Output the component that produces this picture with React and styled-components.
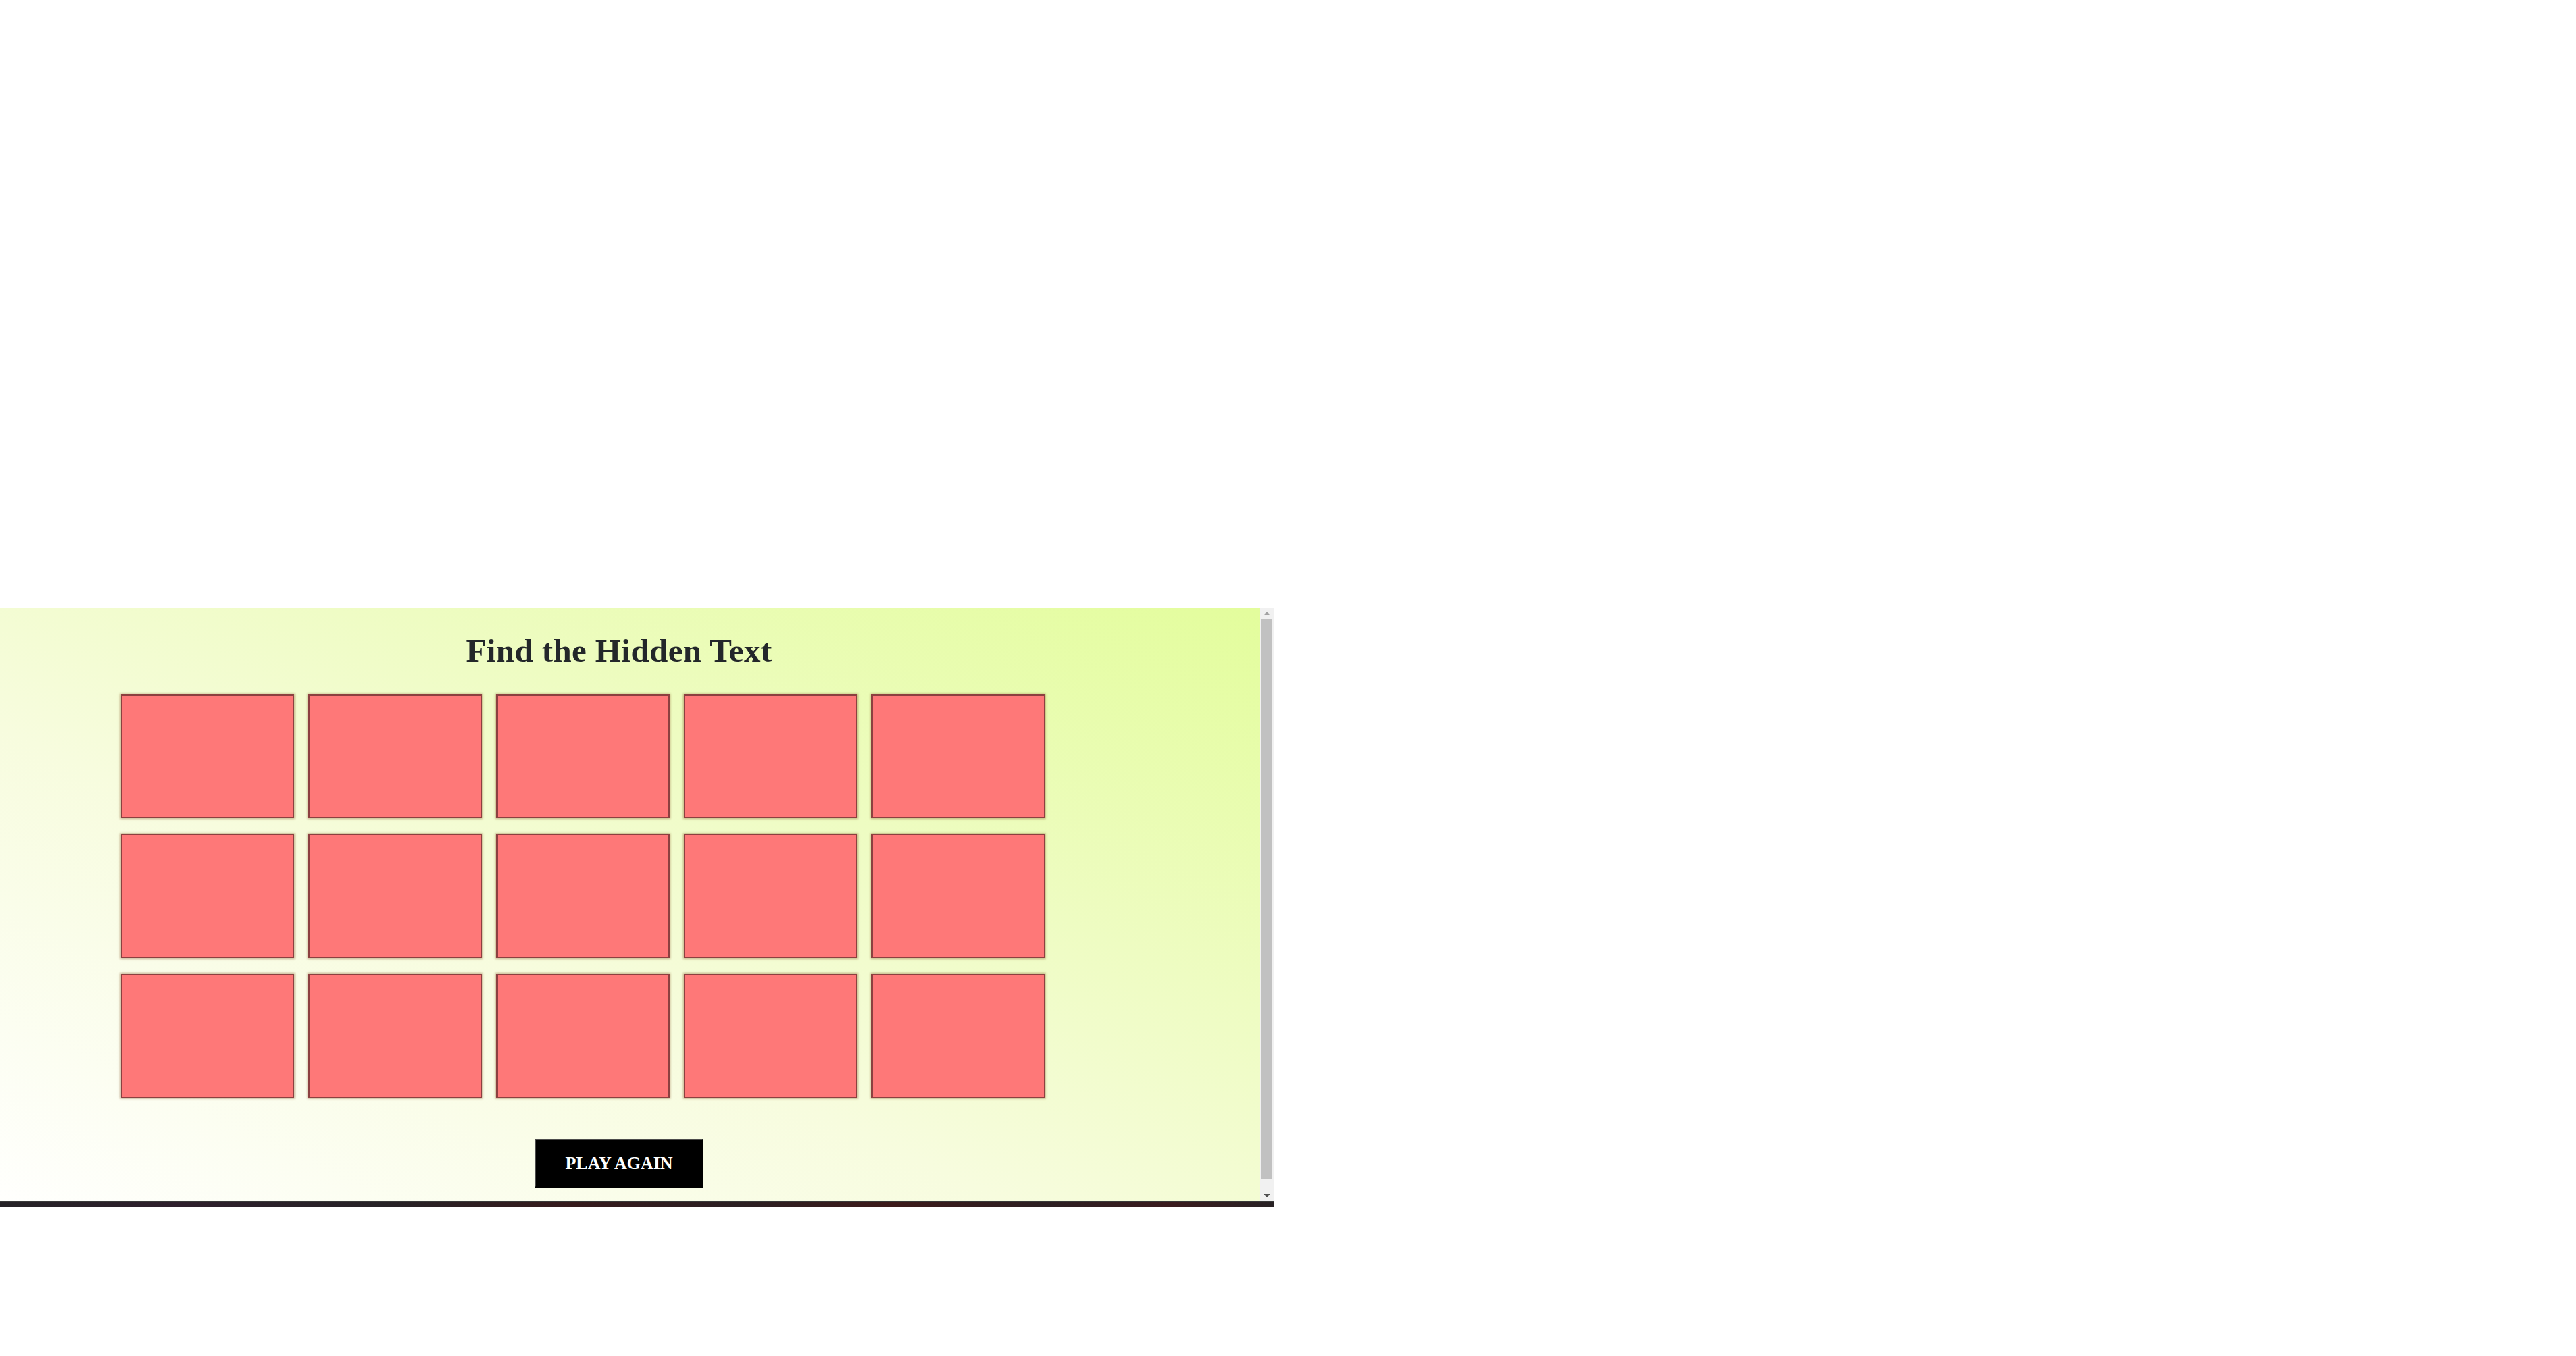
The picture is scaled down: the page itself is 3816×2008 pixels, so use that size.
import styled, { createGlobalStyle } from "styled-components";

const GlobalStyle = createGlobalStyle`
    html, body {
        margin: 0;
        padding: 0;
        background: #ffffff;
    }
`;

const Page = styled.div`
    padding-top: 900px;
    min-height: 2008px;
    box-sizing: border-box;
`;

const Frame = styled.div`
    width: 1887px;
    display: flex;
    flex-direction: column;
`;

const Window = styled.div`
    height: 879px;
    display: flex;
`;

const Viewport = styled.div`
    flex: 1;
    overflow: hidden;
    background: linear-gradient(to top right, #fffffd 0%, #f7fcde 40%, #eefcc2 66%, #e3fd9c 100%);
`;

const ScrollBar = styled.div`
    width: 21px;
    background: #f1f1f1;
    display: flex;
    flex-direction: column;
`;

const ArrowButton = styled.div`
    height: 17px;
    display: flex;
    align-items: center;
    justify-content: center;

    &::before {
        content: "";
        width: 0;
        height: 0;
        border-left: 5px solid transparent;
        border-right: 5px solid transparent;
        ${(p) =>
            p.$down
                ? `border-top: 5px solid #505050;`
                : `border-bottom: 5px solid #a3a3a3;`}
    }
`;

const Track = styled.div`
    flex: 1;
    padding: 0 2px 16px;
    display: flex;
`;

const Thumb = styled.div`
    flex: 1;
    background: #c1c1c1;
`;

const Content = styled.div`
    width: 1834px;
    padding-bottom: 40px;
    display: flex;
    flex-direction: column;
    align-items: center;
`;

const Title = styled.h1`
    margin: 36px 0 0;
    font-family: "Liberation Serif", "Times New Roman", serif;
    font-weight: 700;
    font-size: 49px;
    letter-spacing: 0.4px;
    line-height: 56px;
    color: #23272a;
`;

const Board = styled.div`
    align-self: flex-start;
    margin: 36px 0 0 179px;
    display: grid;
    grid-template-columns: repeat(5, 257px);
    grid-auto-rows: 184px;
    column-gap: 21px;
    row-gap: 23px;
`;

const Card = styled.div`
    box-sizing: border-box;
    background: ${(p) => (p.$open ? "#ffffff" : "#fe7878")};
    border: 2px solid #8c4040;
    box-shadow: 0 0 3px 1px rgba(130, 80, 30, 0.45);
    cursor: pointer;
`;

const PlayButton = styled.button`
    margin-top: 60px;
    width: 250px;
    height: 73px;
    box-sizing: border-box;
    background: #000000;
    color: #ffffff;
    border: 2px solid;
    border-color: #4c4c4c #000000 #000000 #4c4c4c;
    font-family: "Liberation Serif", "Times New Roman", serif;
    font-weight: 700;
    font-size: 26px;
    cursor: pointer;
`;

const Taskbar = styled.div`
    height: 9px;
    background: linear-gradient(
        to right,
        #252226 0%,
        #2e1f2c 14%,
        #262226 30%,
        #361a1c 45%,
        #2b1f22 58%,
        #3d1a1a 70%,
        #2c1f22 82%,
        #3a1b1e 92%,
        #282224 100%
    );
    border-top: 1px solid #3a3a3a;
    box-sizing: border-box;
`;

const cards = Array.from({ length: 15 }, (_, i) => i);

const App = () => {
    return (
        <>
            <GlobalStyle />
            <Page>
                <Frame>
                    <Window>
                        <Viewport>
                            <Content>
                                <Title>Find the Hidden Text</Title>
                                <Board>
                                    {cards.map((c) => (
                                        <Card key={c} />
                                    ))}
                                </Board>
                                <PlayButton>PLAY AGAIN</PlayButton>
                            </Content>
                        </Viewport>
                        <ScrollBar>
                            <ArrowButton />
                            <Track>
                                <Thumb />
                            </Track>
                            <ArrowButton $down />
                        </ScrollBar>
                    </Window>
                    <Taskbar />
                </Frame>
            </Page>
        </>
    );
};

export default App;
